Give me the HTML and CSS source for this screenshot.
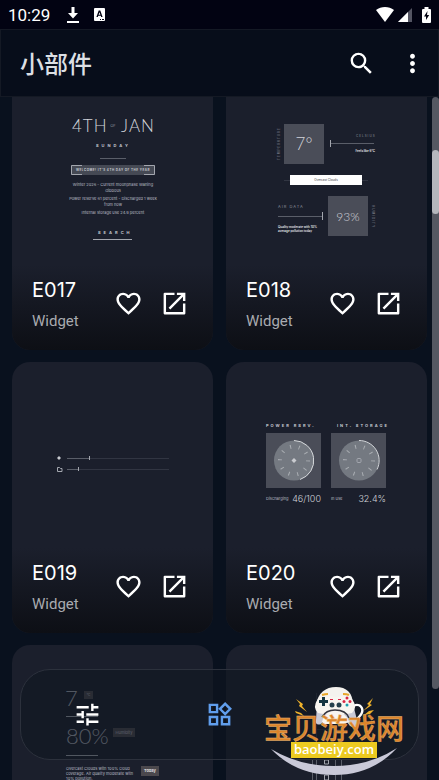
FILE: index.html
```html
<!DOCTYPE html>
<html lang="zh-CN">
<head>
<meta charset="utf-8">
<meta name="viewport" content="width=device-width, initial-scale=1">
<title>小部件</title>
<link rel="stylesheet" href="styles.css">
</head>
<body>
<svg class="symbols" aria-hidden="true">
  <symbol id="heart" viewBox="0 0 24 24"><path d="M16.5 3c-1.74 0-3.41.81-4.5 2.09C10.91 3.81 9.24 3 7.5 3 4.42 3 2 5.42 2 8.5c0 3.78 3.4 6.86 8.55 11.54L12 21.35l1.45-1.32C18.6 15.36 22 12.28 22 8.5 22 5.42 19.58 3 16.5 3zm-4.4 15.55l-.1.1-.1-.1C7.14 14.24 4 11.39 4 8.5 4 6.5 5.5 5 7.5 5c1.54 0 3.04.99 3.57 2.36h1.87C13.46 5.99 14.96 5 16.5 5c2 0 3.5 1.5 3.5 3.5 0 2.89-3.14 5.74-7.9 10.05z"/></symbol>
  <symbol id="open" viewBox="0 0 24 24"><path d="M19 19H5V5h7V3H4a1 1 0 0 0-1 1v16a1 1 0 0 0 1 1h16a1 1 0 0 0 1-1v-8h-2v7zM14 3v2h3.59l-10.5 10.5 1.41 1.41L19 6.41V10h2V3h-7z"/></symbol>
</svg>

<div class="status">
  <time>10:29</time>
  <svg class="status-download" viewBox="0 0 12 16"><path d="M4.500 0h3v6H11L6 11.500 1 6h3.500zM0 14h12v2H0z"/></svg>
  <svg class="status-app" viewBox="0 0 11 13"><rect width="11" height="13" rx="1"/><path class="cut" d="M4.700 2.500h1.600L8.600 9H7.200l-.4-1.300H4.200L3.800 9H2.400zM5.500 4.300l-.9 2.400h1.800zM6 11h1v1H6zM8 11h2v1H8z"/></svg>
  <span class="spacer"></span>
  <svg class="status-wifi" viewBox="0 0 18 15"><path d="M0 3C5-1 13-1 18 3L9 15z"/></svg>
  <svg class="status-cell" viewBox="0 0 14 14"><path class="dim" d="M14 0v14H0z"/><path d="M10 4v10H0z"/></svg>
  <svg class="status-battery" viewBox="0 0 9 16"><path d="M2.500 0h4v2H8a1 1 0 0 1 1 1v12a1 1 0 0 1-1 1H1a1 1 0 0 1-1-1V3a1 1 0 0 1 1-1h1.500z"/><path class="cut" d="M5.500 4L2 9.500h2V13l3.200-5H5z"/></svg>
</div>

<header class="header">
  <h1>小部件</h1>
  <button class="icon-button" type="button" aria-label="搜索"><svg viewBox="0 0 24 24"><path d="M15.500 14h-.79l-.28-.27A6.471 6.471 0 0 0 16 9.500 6.500 6.500 0 1 0 9.500 16c1.610 0 3.090-.59 4.230-1.570l.27.28v.79l5 4.990L20.490 19l-4.990-5zm-6 0C7.010 14 5 11.990 5 9.500S7.010 5 9.500 5 14 7.010 14 9.500 11.990 14 9.500 14z"/></svg></button>
  <button class="icon-button" type="button" aria-label="更多"><svg viewBox="0 0 24 24"><path d="M12 8c1.100 0 2-.9 2-2s-.9-2-2-2-2 .9-2 2 .9 2 2 2zm0 2c-1.100 0-2 .9-2 2s.9 2 2 2 2-.9 2-2-.9-2-2-2zm0 6c-1.100 0-2 .9-2 2s.9 2 2 2 2-.9 2-2-.9-2-2-2z"/></svg></button>
</header>

<main class="content">
  <div class="grid">
    <article class="card">
      <svg class="preview" viewBox="0 0 201 186">
        <text class="thin" x="60" y="53" font-size="17" letter-spacing="1">4TH</text>
        <text class="dim-text" x="101" y="48" font-size="4" text-anchor="middle">OF</text>
        <text class="thin" x="109" y="53" font-size="17" letter-spacing="1">JAN</text>
        <text class="bold" x="84" y="68" font-size="4" letter-spacing="3">SUNDAY</text>
        <path class="line-dim" d="M88 79.500h26"/>
        <rect class="plate" x="59" y="86" width="84" height="10"/>
        <path class="line" d="M70 86.500H59.500v9H70M132 86.500h10.500v9H132"/>
        <text class="bold" x="101" y="92" font-size="3" text-anchor="middle" letter-spacing=".5">WELCOME! IT'S 4TH DAY OF THE YEAR</text>
        <g class="copy" font-size="4" text-anchor="middle">
          <text x="101" y="107">Winter 2026 - Current moonphase Waning</text>
          <text x="101" y="113">Gibbous</text>
          <text x="101" y="121">Power reserve 61 percent - Discharged 1 week</text>
          <text x="101" y="127">from now</text>
          <text x="101" y="135">Internal storage use 24.9 percent</text>
        </g>
        <text class="bold" x="86" y="155" font-size="4" letter-spacing="3">SEARCH</text>
        <path class="line" d="M81 160.500h39"/>
      </svg>
      <footer class="card-footer">
        <div class="label"><h2>E017</h2><p>Widget</p></div>
        <button class="icon-button" type="button" aria-label="收藏 E017"><svg><use href="#heart"/></svg></button>
        <button class="icon-button" type="button" aria-label="打开 E017"><svg><use href="#open"/></svg></button>
      </footer>
    </article>

    <article class="card">
      <svg class="preview" viewBox="0 0 201 186">
        <rect class="tile" x="58" y="45" width="40" height="40"/>
        <text class="thin" x="78" y="71" font-size="17" text-anchor="middle">7°</text>
        <text class="dim-text" transform="translate(54 81) rotate(-90)" font-size="3" letter-spacing="1">TEMPERATURE</text>
        <path class="line-dim" d="M104 64.500h44"/><path class="line" d="M104.500 61v7"/>
        <text class="dim-text" x="130" y="58" font-size="3" letter-spacing="1">CELSIUS</text>
        <text class="strong" x="149" y="73" font-size="3" text-anchor="end">Feels like 6°C</text>
        <path class="line-faint" d="M58 101.500h84"/>
        <rect class="white" x="64" y="96" width="72" height="10"/>
        <text class="ink" x="100" y="102" font-size="3" text-anchor="middle">Overcast Clouds</text>
        <text class="dim-text" x="52" y="129" font-size="4" letter-spacing="1">AIR DATA</text>
        <path class="line-dim" d="M52 137.500h44"/><path class="line" d="M96.500 133v8"/>
        <text class="strong" x="52" y="149" font-size="3">Quality moderate with 10%</text>
        <text class="strong" x="52" y="153" font-size="3">average pollution today</text>
        <rect class="tile" x="102" y="117" width="40" height="40"/>
        <text class="thin" x="122" y="142" font-size="12" text-anchor="middle">93%</text>
        <text class="dim-text" transform="translate(146 126) rotate(90)" font-size="3" letter-spacing="1">HUMIDITY</text>
      </svg>
      <footer class="card-footer">
        <div class="label"><h2>E018</h2><p>Widget</p></div>
        <button class="icon-button" type="button" aria-label="收藏 E018"><svg><use href="#heart"/></svg></button>
        <button class="icon-button" type="button" aria-label="打开 E018"><svg><use href="#open"/></svg></button>
      </footer>
    </article>

    <article class="card">
      <svg class="preview" viewBox="0 0 201 186">
        <path class="glyph" d="M47 94l2 2-2 2-2-2zM45.500 96l-1 0M48.500 96h1.500"/>
        <path class="line-faint" d="M55 96.500h102M55 107.500h102"/>
        <path class="line-dim" d="M55 96.500h22M55 107.500h11"/>
        <path class="line" d="M77.500 94v4M66.500 105v4"/>
        <path class="line" d="M45.500 105.500h2l1 1h1.500v3h-4.500z"/>
      </svg>
      <footer class="card-footer">
        <div class="label"><h2>E019</h2><p>Widget</p></div>
        <button class="icon-button" type="button" aria-label="收藏 E019"><svg><use href="#heart"/></svg></button>
        <button class="icon-button" type="button" aria-label="打开 E019"><svg><use href="#open"/></svg></button>
      </footer>
    </article>

    <article class="card">
      <svg class="preview" viewBox="0 0 201 186">
        <g class="bold" font-size="4">
          <text x="40" y="65" letter-spacing="2">POWER RSRV.</text>
          <text x="111" y="65" letter-spacing="2">INT. STORAGE</text>
        </g>
        <rect class="tile" x="40" y="71" width="55" height="55"/>
        <rect class="tile" x="105" y="71" width="55" height="55"/>
        <circle class="dial" cx="68" cy="98.500" r="20"/>
        <circle class="dial" cx="133" cy="98.500" r="20"/>
        <path class="arc" d="M68 78.500a20 20 0 0 1 6 39M133 78.500a20 20 0 0 1 18 29"/>
        <circle class="ticks" cx="68" cy="98.500" r="14"/>
        <circle class="ticks" cx="133" cy="98.500" r="14"/>
        <path class="glyph" d="M68 96l2.500 2.500-2.500 2.500-2.500-2.500z"/>
        <rect class="line" x="131" y="96.500" width="4" height="4" rx="1"/>
        <text class="copy" x="40" y="138" font-size="4">Discharging</text>
        <text class="thin figure" x="95" y="140" font-size="9" text-anchor="end">46/100</text>
        <text class="copy" x="105" y="138" font-size="4">In use</text>
        <text class="thin figure" x="160" y="140" font-size="9" text-anchor="end">32.4%</text>
      </svg>
      <footer class="card-footer">
        <div class="label"><h2>E020</h2><p>Widget</p></div>
        <button class="icon-button" type="button" aria-label="收藏 E020"><svg><use href="#heart"/></svg></button>
        <button class="icon-button" type="button" aria-label="打开 E020"><svg><use href="#open"/></svg></button>
      </footer>
    </article>

    <article class="card">
      <svg class="preview" viewBox="0 0 201 186">
        <text class="hairline" x="53" y="61" font-size="22">7</text>
        <rect class="badge" x="72" y="46" width="9" height="8"/><text class="copy" x="76.500" y="51" font-size="3" text-anchor="middle">°C</text>
        <path class="line" d="M54 71.500h32M54 110.500h32"/>
        <text class="hairline" x="54" y="99" font-size="22">80%</text>
        <rect class="badge" x="101" y="83" width="22" height="9"/><text class="copy" x="112" y="89" font-size="4" text-anchor="middle">Humidity</text>
        <g class="copy" font-size="4"><text x="54" y="125">Overcast Clouds with 100% cloud</text><text x="54" y="130">coverage. Air quality moderate with</text><text x="54" y="135">10% pollution.</text></g>
        <rect class="badge" x="129" y="121" width="18" height="10"/><text class="strong" x="138" y="127" font-size="4" text-anchor="middle">Today</text>
      </svg>
    </article>

    <article class="card">
      <svg class="preview" viewBox="0 0 201 186">
        <path class="line-dim" d="M86.500 114v72M90.500 114v72M109.500 114v72M115.500 114v72"/>
        <path class="line-faint" d="M90.500 48v66M86 84.500h30"/>
        <path class="line" d="M98.500 115h4v4h-4zM98.500 130h4v5h-4z"/>
      </svg>
    </article>
  </div>
  <div class="scrollbar"><div class="scroll-thumb"></div></div>
</main>

<nav class="dock" aria-label="主导航">
  <button class="icon-button" type="button" aria-label="设置"><svg viewBox="0 0 24 24"><path d="M3 17v2h6v-2H3zM3 5v2h10V5H3zm10 16v-2h8v-2h-8v-2h-2v6h2zM7 9v2H3v2h4v2h2V9H7zm14 4v-2H11v2h10zm-6-4h2V7h4V5h-4V3h-2v6z"/></svg></button>
  <button class="icon-button active" type="button" aria-label="小部件"><svg viewBox="0 0 24 24"><path d="M16.660 4.520l2.830 2.830-2.830 2.830-2.830-2.830 2.830-2.830M9 5v4H5V5h4m10 10v4h-4v-4h4M9 15v4H5v-4h4m7.660-13.310L11 7.340 16.660 13l5.660-5.660-5.660-5.650zM11 3H3v8h8V3zm10 10h-8v8h8v-8zm-10 0H3v8h8v-8z"/></svg></button>
  <button class="icon-button" type="button" aria-label="收藏夹"><svg><use href="#heart"/></svg></button>
</nav>

<svg class="watermark" viewBox="0 0 144 94">
  <!-- gamepad -->
  <path d="M54 18Q58 1 74 1t17 17z" fill="#f4f2ee"/>
  <path fill="#c9c9d6" d="M55 18q18-7 36 0l5 20q0 6-8 2l-6-8q-9-4-17 0l-6 6q-6 2-5-4z"/>
  <path fill="#f8f5f0" d="M56 13q8-4 18-2 10-2 16 2 6 8 0 14-8 2-16 1-10 1-18-1-6-6 0-14zM60 36q2-10 13-10 11 0 14 10l-5 2H62z"/>
  <path fill="none" stroke="#33343d" stroke-width="1.500" d="M60 31q4-7 13-7 11 0 14 8"/>
  <path fill="#163642" d="M60 11h3v3h3v3h-3v3h-3v-3h-3v-3h3z"/>
  <g fill="#d92846"><circle cx="85" cy="12" r="1.500"/><circle cx="82" cy="15.500" r="1.500"/><path d="M68 13h3v1h-3zM76 13h3v1h-3z"/></g>
  <circle cx="88" cy="15.500" r="1.500" fill="#d92846"/><circle cx="85" cy="19" r="1.500" fill="#1b9fae"/>
  <circle cx="70" cy="19" r="2.500" fill="#25404c"/><circle cx="77" cy="19" r="2.500" fill="#25404c"/>
  <path fill="none" stroke="#e8a62a" stroke-width="2" d="M60 9q3-1 6-1M81 8q4 0 6 1"/>
  <path fill="#efb22b" d="M34 13l7 5-1 2 5 6-8-6 1-2zM33 25l6 2 3 3-8-3zM111 12l-6 6 2 1-6 6 9-6-2-1zM112 24l-5 1-5 4 6-1z"/>
  <text class="mark-title" x="72" y="53" text-anchor="middle">宝贝游戏网</text>
  <path fill="#c9c9d8" d="M9 63Q37 80 72 80T135 62Q110 89 72 89T9 63z"/>
  <rect x="29" y="56" width="86" height="16" fill="#ecca20"/>
  <text class="mark-url" x="72" y="68" text-anchor="middle">baobeiy.com</text>
</svg>
</body>
</html>
```

FILE: styles.css
```css
* { box-sizing: border-box; }

body {
  margin: 0;
  height: 100vh;
  display: flex;
  flex-direction: column;
  position: relative;
  overflow: hidden;
  background: #09111e;
  color: #fff;
  font-family: Roboto, "Noto Sans CJK SC", sans-serif;
}

h1, h2, p { margin: 0; }
svg { display: block; fill: currentColor; }
.symbols { display: none; }

/* Status bar */
.status {
  flex: none;
  display: flex;
  align-items: center;
  height: 29px;
  padding: 0 8px;
  background: #020312;
}
.status time { font-size: 17px; line-height: 28px; margin-right: 17px; }
.spacer { flex: 1; }
.status-download { width: 12px; height: 16px; margin-right: 15px; }
.status-app { width: 11px; height: 13px; }
.status-wifi { width: 18px; height: 15px; margin-right: 4px; }
.status-cell { width: 14px; height: 14px; margin-right: 10px; }
.status-battery { width: 9px; height: 16px; }
.dim { fill: #545563; }
.cut { fill: #020312; }

/* Header */
.header {
  flex: none;
  z-index: 1;
  display: flex;
  align-items: center;
  gap: 22px;
  height: 68px;
  padding: 0 11px 0 19px;
  border: 1px solid #141924;
  background: #070d1a;
}
.header h1 {
  flex: 1;
  color: #dcdfe3;
  font: 500 24px/36px "Noto Sans CJK SC", sans-serif;
}

.icon-button {
  flex: none;
  padding: 0;
  border: 0;
  background: none;
  color: #fff;
}
.icon-button svg { width: 29px; height: 29px; }
.icon-button.active { color: #609eed; }

/* Widget grid, scrolled a little way under the header */
.content { position: relative; flex: 1; min-height: 0; overflow: hidden; }
.grid {
  display: grid;
  grid-template-columns: 1fr 1fr;
  gap: 12px 13px;
  margin-top: -18px;
  padding: 0 12px;
}
.card {
  overflow: hidden;
  border-radius: 18px;
  background: #1b1f2c;
}
.preview { width: 100%; font-family: Inter, sans-serif; }
.card-footer {
  display: flex;
  align-items: flex-start;
  gap: 17px;
  padding: 13px 24px 18px 20px;
  background: linear-gradient(#1b1f2c, #0d0f15);
}
.card-footer .icon-button { margin-top: 11px; }
.label { flex: 1; }
.label h2 { font: 400 20px/24px Inter, sans-serif; }
.label p { margin-top: 9px; color: #a9abb0; font-size: 15px; line-height: 21px; }

/* Preview drawing */
.thin { font-family: Lato, sans-serif; font-weight: 300; fill: #d2d4da; }
.figure { font-family: Inter, sans-serif; }
.hairline { font-family: Lato, sans-serif; font-weight: 300; fill: #a3a7b0; }
.bold { font-weight: 700; fill: #c4c7ce; }
.copy { fill: #b9bcc4; }
.strong { font-weight: 600; fill: #e8e9ec; }
.dim-text { fill: #8c909b; }
.ink { fill: #3b3d45; }
.white { fill: #fff; }
.tile { fill: #4a4d58; }
.plate { fill: #454954; }
.badge { fill: #4b484d; }
.dial { fill: #747981; }
.glyph { fill: #c9cbd0; }
.line, .line-dim, .line-faint, .arc { fill: none; stroke: #a3a6ae; }
.line-dim { stroke: #5a5e69; }
.line-faint { stroke: #313542; }
.arc { stroke: #d4d7da; }
.ticks { fill: none; stroke: #a9adb2; stroke-width: 4; stroke-dasharray: 1 7.796; }

/* Scrollbar */
.scrollbar {
  position: absolute;
  top: 0;
  right: 0;
  bottom: 91px;
  width: 7px;
  padding-top: 53px;
  border-radius: 4px;
  background: #555862;
}
.scroll-thumb { height: 64px; border-radius: 4px; background: #b5b7bd; }

/* Floating navigation */
.dock {
  position: absolute;
  right: 20px;
  bottom: 20px;
  left: 20px;
  display: grid;
  grid-template-columns: repeat(3, 1fr);
  place-items: center;
  height: 91px;
  border: 1px solid #2c313c;
  border-radius: 30px;
  background: rgb(15 21 33 / 55%);
}

/* Site mark */
.watermark { position: absolute; right: 33px; bottom: 0; width: 144px; height: 94px; }
.mark-title {
  font: 500 28px "Noto Sans CJK SC", sans-serif;
  fill: #dc842a;
  stroke: #e9b877;
  stroke-width: .4;
}
.mark-url { font: 600 13px "Open Sans", sans-serif; fill: #fff; }
```
